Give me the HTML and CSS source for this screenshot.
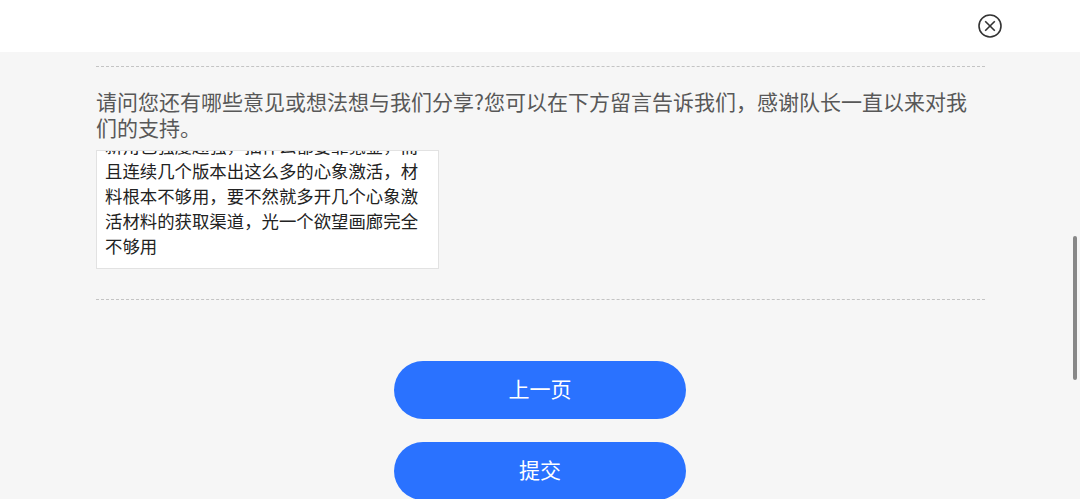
FILE: index.html
```html
<!DOCTYPE html>
<html lang="zh-CN">
<head>
  <meta charset="UTF-8">
  <title>问卷</title>
  <link rel="stylesheet" href="styles.css">
</head>
<body>
  <header class="top-bar">
    <button class="close" aria-label="关闭">
      <svg width="24" height="24" viewBox="0 0 24 24" fill="none" stroke="#333" stroke-width="1.6">
        <circle cx="12" cy="12" r="11"/>
        <path d="M7.2 7.2 16.8 16.8M16.8 7.2 7.2 16.8"/>
      </svg>
    </button>
  </header>

  <main class="content">
    <section class="question">
      <p class="question-title">请问您还有哪些意见或想法想与我们分享?您可以在下方留言告诉我们，感谢队长一直以来对我们的支持。</p>
      <div class="answer">
        <p>新角色强度越强，抽什么都要靠氪金，而且连续几个版本出这么多的心象激活，材料根本不够用，要不然就多开几个心象激活材料的获取渠道，光一个欲望画廊完全不够用</p>
      </div>
    </section>
    <div class="actions">
      <button class="btn">上一页</button>
      <button class="btn">提交</button>
    </div>
  </main>

  <div class="scrollbar"></div>
</body>
</html>
```

FILE: styles.css
```css
* {
  margin: 0;
  padding: 0;
  box-sizing: border-box;
  font-family: "Noto Sans CJK SC", "Liberation Sans", sans-serif;
}

html, body {
  height: 499px;
  overflow: hidden;
}

body {
  background-color: #f6f6f6;
}

.top-bar {
  display: flex;
  justify-content: flex-end;
  align-items: center;
  height: 52px;
  padding-right: 78px;
  background-color: #fff;
}

.close {
  display: flex;
  border: none;
  background: none;
}

.content {
  padding: 14px 96px 0;
}

.question {
  height: 234px;
  margin-right: -1px;
  padding-top: 21px;
  border-top: 1px dashed #c4c4c4;
  border-bottom: 1px dashed #c4c4c4;
}

.question-title {
  font-size: 21px;
  line-height: 26px;
  color: #585858;
}

.answer {
  display: flex;
  flex-direction: column;
  justify-content: flex-end;
  width: 343px;
  height: 119px;
  margin-top: 10px;
  padding: 0 8px 10px;
  overflow: hidden;
  background-color: #fff;
  border: 1px solid #e2e2e2;
  font-size: 17.4px;
  line-height: 25px;
  color: #222;
}

.actions {
  display: flex;
  flex-direction: column;
  align-items: center;
  gap: 23px;
  margin-top: 61px;
}

.btn {
  flex-shrink: 0;
  width: 292px;
  height: 58px;
  padding-bottom: 4px;
  border: none;
  border-radius: 29px;
  background-color: #2a72ff;
  color: #fff;
  font-size: 21px;
}

.scrollbar {
  position: absolute;
  top: 236px;
  left: 1073px;
  width: 4px;
  height: 144px;
  border-radius: 2px;
  background-color: #888;
}
```
